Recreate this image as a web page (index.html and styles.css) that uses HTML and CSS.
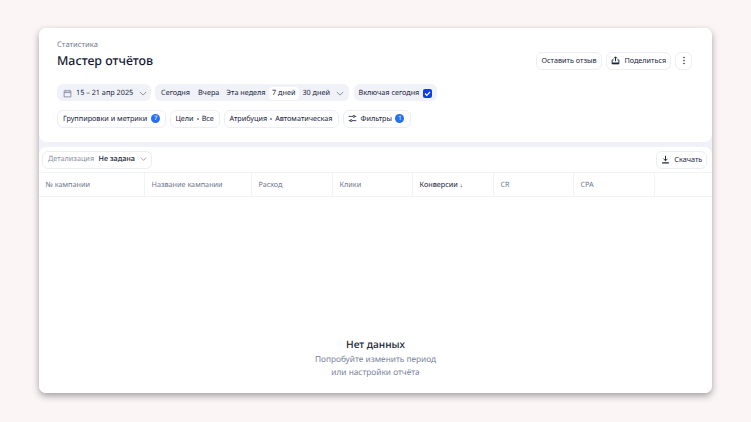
FILE: index.html
```html
<!DOCTYPE html>
<html lang="ru">
<head>
<meta charset="utf-8">
<title>Мастер отчётов</title>
<link rel="stylesheet" href="styles.css">
</head>
<body>
<main class="card">
  <section class="top">
    <div class="head">
      <div>
        <div class="crumb">Статистика</div>
        <h1 class="title">Мастер отчётов</h1>
      </div>
      <div class="actions">
        <button class="btn btn-review">Оставить отзыв</button>
        <button class="btn btn-share">
          <svg class="ico" viewBox="0 0 12 12"><path d="M6 7V1.200M3.900 3.200 6 1.100 8.100 3.200" fill="none" stroke="#1b2440" stroke-width="1.300"/><path d="M3.500 5.200H1.500v5.300h9V5.200H8.500" fill="none" stroke="#1b2440" stroke-width="1.200"/><path d="M1.500 8.800h9v1.700h-9z" fill="#1b2440"/></svg>
          Поделиться
        </button>
        <button class="btn btn-more" aria-label="Ещё">
          <svg class="dots" viewBox="0 0 4 12"><circle cx="2" cy="2" r="1" fill="#1b2440"/><circle cx="2" cy="6" r="1" fill="#1b2440"/><circle cx="2" cy="10" r="1" fill="#1b2440"/></svg>
        </button>
      </div>
    </div>
    <div class="row row-one">
      <div class="pill fill date">
        <svg class="ico cal" viewBox="0 0 12 12"><path d="M1.500 2.500h9v8h-9zM1.500 4.800h9M3.800 1v2.200M8.200 1v2.200" fill="none" stroke="#717a93" stroke-width="1"/></svg>
        <span>15 – 21 апр 2025</span>
        <svg class="chev" viewBox="0 0 10 6"><path d="M1 1l4 4 4-4" fill="none" stroke="#717a93" stroke-width="1"/></svg>
      </div>
      <div class="pill fill period">
        <span class="seg seg-a">Сегодня</span>
        <span class="seg seg-b">Вчера</span>
        <span class="seg seg-c">Эта неделя</span>
        <span class="seg seg-on">7 дней</span>
        <span class="seg seg-d">30 дней</span>
        <svg class="chev chev-period" viewBox="0 0 10 6"><path d="M1 1l4 4 4-4" fill="none" stroke="#717a93" stroke-width="1"/></svg>
      </div>
      <div class="pill fill incl">
        <span>Включая сегодня</span>
        <svg class="check" viewBox="0 0 9 9"><rect width="9" height="9" rx="2" fill="#0f3fe0"/><path d="M2 4.500l1.800 1.800L7 3" fill="none" stroke="#fff" stroke-width="1.200"/></svg>
      </div>
    </div>
    <div class="row row-two">
      <div class="pill line groups">Группировки и метрики <span class="badge">7</span></div>
      <div class="pill line goals">Цели <i class="sep"></i> Все</div>
      <div class="pill line attr">Атрибуция <i class="sep"></i> Автоматическая</div>
      <div class="pill line filters">
        <svg class="ico" viewBox="0 0 12 12"><path d="M1 3.200h5.500M9 3.200h2M1 8.800h2M5.500 8.800H11" fill="none" stroke="#1b2440" stroke-width="1.100"/><circle cx="7.700" cy="3.200" r="1.300" fill="none" stroke="#1b2440" stroke-width="1.100"/><circle cx="4.200" cy="8.800" r="1.300" fill="none" stroke="#1b2440" stroke-width="1.100"/></svg>
        Фильтры <span class="badge">1</span>
      </div>
    </div>
  </section>
  <section class="bottom">
    <div class="toolbar">
      <div class="pill line detail">
        <span class="muted">Детализация</span>
        <span class="strong">Не задана</span>
        <svg class="chev chev-s" viewBox="0 0 10 6"><path d="M1 1l4 4 4-4" fill="none" stroke="#717a93" stroke-width="1"/></svg>
      </div>
      <button class="btn btn-down">
        <svg class="ico" viewBox="0 0 12 12"><path d="M6 1v6.500M3.300 5 6 7.700 8.700 5" fill="none" stroke="#1b2440" stroke-width="1.300"/><path d="M1.500 10.500h9" stroke="#1b2440" stroke-width="1.400"/></svg>
        Скачать
      </button>
    </div>
    <div class="thead">
      <div class="th">№ кампании</div>
      <div class="th">Название кампании</div>
      <div class="th">Расход</div>
      <div class="th">Клики</div>
      <div class="th th-on">Конверсии <span class="arrow">↓</span></div>
      <div class="th">CR</div>
      <div class="th">CPA</div>
      <div class="th"></div>
    </div>
    <div class="empty">
      <div class="empty-title">Нет данных</div>
      <div class="empty-text">Попробуйте изменить период<br>или настройки отчёта</div>
    </div>
  </section>
</main>
</body>
</html>
```
FILE: styles.css
```css
* { box-sizing: border-box; }
html, body { height: 100%; }
body {
  margin: 0;
  height: 422px;
  overflow: hidden;
  padding: 28px 39px 29px;
  background: #fbf5f5;
  font-family: "Noto Sans", "Liberation Sans", sans-serif;
  font-size: 7.250px;
  text-rendering: geometricPrecision;
  color: #1b2440;
}
.card {
  height: 365px;
  width: 673px;
  display: flex;
  flex-direction: column;
  background: #f0f2f7;
  border-radius: 7px;
  box-shadow: 0 3px 7px rgba(40, 40, 50, .42);
  overflow: hidden;
}
.top {
  background: #fff;
  height: 114px;
  padding: 10px 20px 0 18px;
  border-radius: 0 0 8px 8px;
}
.head { display: flex; justify-content: space-between; height: 46px; }
.crumb { font-size: 7.600px; line-height: 14px; color: #6f7890; }
.title { margin: 0; font-size: 12.400px; line-height: 17px; font-weight: 500; color: #151c33; }
.actions { display: flex; gap: 4px; padding-top: 14px; }
.btn {
  height: 17.500px;
  padding: 0 0 1px;
  font: inherit;
  color: inherit;
  background: #fff;
  border: 1px solid #eceef5;
  border-radius: 6px;
  display: flex;
  align-items: center;
  justify-content: center;
  gap: 4.500px;
}
.btn-review { width: 66px; }
.btn-share { width: 65px; }
.btn-more { width: 17px; }
.ico { width: 9px; height: 9px; flex: none; }
.dots { width: 4px; height: 9px; }
.row { display: flex; }
.row-one { gap: 4.500px; height: 17px; }
.row-two { gap: 4px; height: 17.500px; margin-top: 9px; }
.pill {
  display: flex;
  align-items: center;
  height: 17px;
  border-radius: 6px;
  white-space: nowrap;
}
.fill { background: #f0f2f8; padding-top: 1px; }
.line { background: #fff; border: 1px solid #eceef5; height: 17.500px; }
.date { width: 93.500px; padding-left: 6px; }
.cal { margin-right: 4px; }
.date .chev { margin-left: 6px; }
.chev { width: 8px; height: 5px; flex: none; }
.period { width: 194px; padding-left: 6px; }
.seg { display: block; line-height: 13px; }
.seg-b { margin-left: 8px; }
.seg-c { margin-left: 7px; }
.seg-on {
  margin-left: 3px;
  padding: 0 3.500px;
  background: #fff;
  border-radius: 4px;
}
.seg-d { margin-left: 3.500px; }
.chev-period { margin-left: 6px; }
.incl { width: 83px; padding-left: 5px; gap: 4px; }
.check { width: 9px; height: 9px; flex: none; }
.groups { width: 108.500px; padding-left: 5px; gap: 4px; }
.goals { width: 50px; padding-left: 5px; gap: 3px; }
.attr { width: 115px; padding-left: 5px; gap: 3px; }
.filters { width: 68.500px; padding-left: 4.500px; gap: 3.500px; }
.sep { width: 2px; height: 2px; border-radius: 50%; background: #717a93; }
.badge {
  width: 9px;
  height: 9px;
  border-radius: 50%;
  background: #2670f0;
  color: #fff;
  font-size: 6px;
  line-height: 9px;
  text-align: center;
  flex: none;
}
.bottom {
  flex: 1;
  margin-top: 5px;
  background: #fff;
  display: flex;
  flex-direction: column;
  border-radius: 8px 8px 0 0;
}
.toolbar {
  display: flex;
  justify-content: space-between;
  padding: 4px 5px 0 3px;
  height: 25px;
}
.detail { width: 110px; padding: 0 0 1px 5px; gap: 4.500px; }
.muted { color: #8a92a8; }
.strong { color: #151c33; font-weight: 500; }
.chev-s { width: 7px; height: 4px; margin-left: 1px; }
.btn-down { width: 51px; }
.thead {
  display: grid;
  grid-template-columns: 106px 107px 81px 80px 81px 80px 81px 57px;
  height: 25px;
  border-top: 1px solid #f1f3f7;
  border-bottom: 1px solid #f1f3f7;
}
.th {
  display: flex;
  align-items: center;
  padding-left: 6.500px;
  color: #6f7890;
  border-right: 1px solid #f1f3f7;
}
.th:last-child { border-right: 0; }
.th-on { color: #1b2440; gap: 2px; }
.arrow { font-size: 6px; }
.empty {
  flex: 1;
  display: flex;
  flex-direction: column;
  justify-content: flex-end;
  align-items: center;
  padding-bottom: 14px;
  text-align: center;
}
.empty-title { font-size: 10.200px; line-height: 16px; font-weight: 500; color: #151c33; margin-bottom: 1.500px; }
.empty-text { font-size: 8.300px; line-height: 13px; color: #79829c; }
```
